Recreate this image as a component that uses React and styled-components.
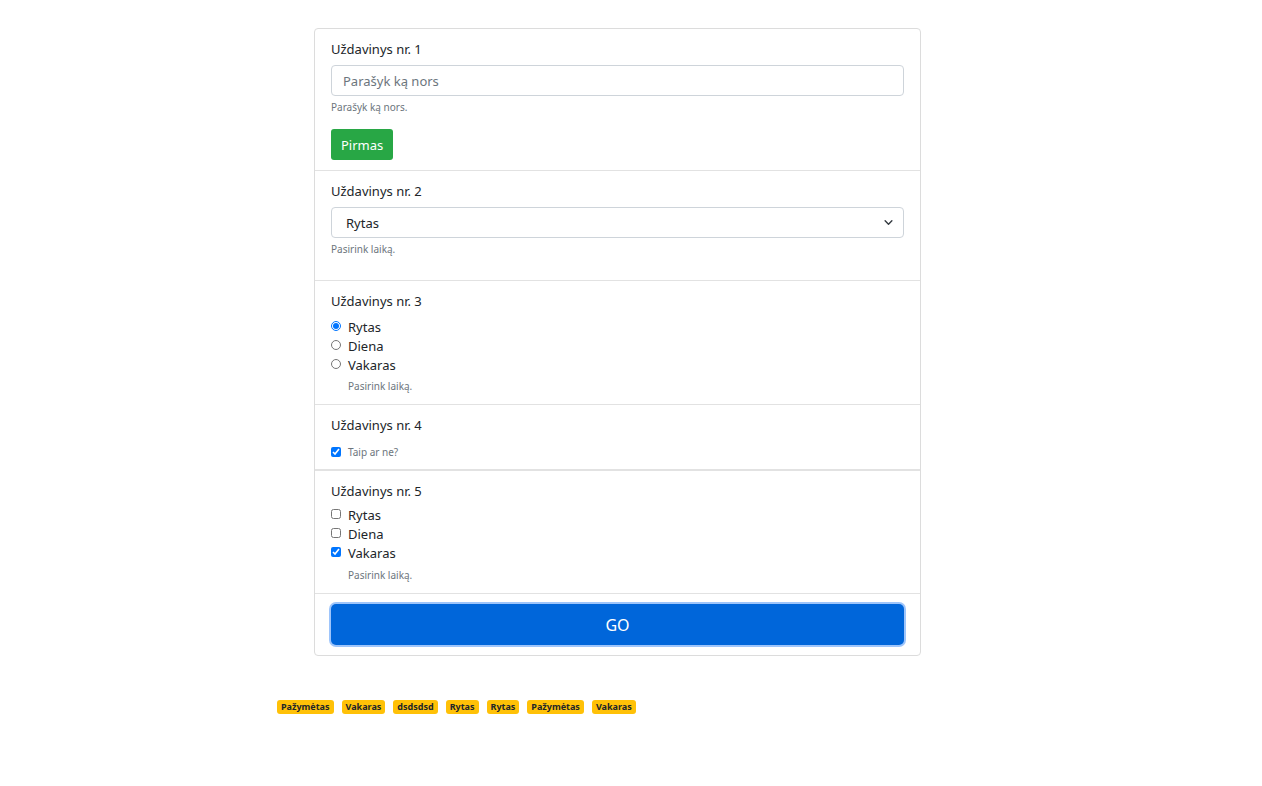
import React from "react"
import styled, { createGlobalStyle } from "styled-components"

const GlobalStyle = createGlobalStyle`
  body {
    margin: 0;
    background: #fff;
    font-family: "Noto Sans", "Liberation Sans", sans-serif;
    color: #212529;
  }
`

const Page = styled.div`
  padding: 28px 0 40px 277px;
`

const Card = styled.form`
  width: 605px;
  margin-left: 37px;
  border: 1px solid #dcdcdc;
  border-radius: 4px;
`

const Section = styled.div`
  padding: 10px 16px ${p => p.$pb || 10}px;
  border-bottom: ${p => p.$thick ? 2 : 1}px solid #e2e2e2;
  &:last-child {
    border-bottom: none;
  }
`

const Label = styled.div`
  font-size: 13px;
  line-height: 20px;
  margin-bottom: ${p => p.$mb ?? 6}px;
`

const Input = styled.input`
  display: block;
  box-sizing: border-box;
  width: 100%;
  height: 31px;
  padding: 0 11px;
  font-family: inherit;
  font-size: 13px;
  color: #495057;
  border: 1px solid #ced4da;
  border-radius: 4px;
  &::placeholder {
    color: #6c757d;
  }
`

const SelectWrap = styled.div`
  position: relative;
  svg {
    position: absolute;
    right: 10px;
    top: 11px;
    pointer-events: none;
  }
`

const Select = styled.select`
  display: block;
  box-sizing: border-box;
  width: 100%;
  height: 31px;
  padding: 0 14px;
  font-family: inherit;
  font-size: 13px;
  color: #212529;
  background: #fff;
  border: 1px solid #ced4da;
  border-radius: 4px;
  appearance: none;
`

const Help = styled.div`
  font-size: 10px;
  line-height: 14px;
  color: #6c757d;
  margin-top: ${p => p.$mt ?? 4}px;
  margin-left: ${p => p.$indent ? 17 : 0}px;
  margin-bottom: ${p => p.$mb || 0}px;
`

const Button = styled.button`
  display: block;
  font-family: inherit;
  border: none;
  color: #fff;
  cursor: pointer;
`

const GreenButton = styled(Button)`
  margin-top: 15px;
  height: 31px;
  padding: 0 10px;
  font-size: 13px;
  background: #28a745;
  border-radius: 3px;
`

const GoButton = styled(Button)`
  width: 100%;
  height: 41px;
  font-size: 16px;
  background: #0066da;
  border-radius: 5px;
  box-shadow: 0 0 0 2px #9ec5fb;
`

const CheckRow = styled.label`
  display: flex;
  align-items: center;
  height: 19px;
  font-size: 13px;
  input {
    width: 10px;
    height: 10px;
    margin: 0 7px 1px 0;
    accent-color: #0075ff;
  }
`

const SmallCheck = styled(CheckRow)`
  margin-top: 10px;
  height: 14px;
  font-size: 10px;
  color: #6c757d;
`

const Badges = styled.div`
  display: flex;
  gap: 8px;
  margin-top: 44px;
`

const Badge = styled.span`
  display: inline-block;
  height: 14px;
  line-height: 14px;
  padding: 0 4px;
  font-size: 9px;
  font-weight: 700;
  color: #212529;
  background: #ffc107;
  border-radius: 3px;
`

const badges = ["Pažymėtas", "Vakaras", "dsdsdsd", "Rytas", "Rytas", "Pažymėtas", "Vakaras"]

export default function App() {
  return (
    <Page>
      <GlobalStyle />
      <Card onSubmit={e => e.preventDefault()}>
        <Section>
          <Label>Uždavinys nr. 1</Label>
          <Input placeholder="Parašyk ką nors" />
          <Help>Parašyk ką nors.</Help>
          <GreenButton type="button">Pirmas</GreenButton>
        </Section>
        <Section>
          <Label>Uždavinys nr. 2</Label>
          <SelectWrap>
            <Select defaultValue="Rytas">
              <option>Rytas</option>
              <option>Diena</option>
              <option>Vakaras</option>
            </Select>
            <svg width="11" height="9" viewBox="0 0 16 16">
              <path d="M2 5l6 6 6-6" fill="none" stroke="#343a40" strokeWidth="2.5" strokeLinecap="round" strokeLinejoin="round" />
            </svg>
          </SelectWrap>
          <Help $mb={14}>Pasirink laiką.</Help>
        </Section>
        <Section $pb={11}>
          <Label $mb={6}>Uždavinys nr. 3</Label>
          <CheckRow><input type="radio" name="laikas" defaultChecked />Rytas</CheckRow>
          <CheckRow><input type="radio" name="laikas" />Diena</CheckRow>
          <CheckRow><input type="radio" name="laikas" />Vakaras</CheckRow>
          <Help $indent $mt={5}>Pasirink laiką.</Help>
        </Section>
        <Section $thick $pb={10}>
          <Label $mb={0}>Uždavinys nr. 4</Label>
          <SmallCheck><input type="checkbox" defaultChecked />Taip ar ne?</SmallCheck>
        </Section>
        <Section $pb={11}>
          <Label $mb={4}>Uždavinys nr. 5</Label>
          <CheckRow><input type="checkbox" />Rytas</CheckRow>
          <CheckRow><input type="checkbox" />Diena</CheckRow>
          <CheckRow><input type="checkbox" defaultChecked />Vakaras</CheckRow>
          <Help $indent $mt={6}>Pasirink laiką.</Help>
        </Section>
        <Section>
          <GoButton type="submit">GO</GoButton>
        </Section>
      </Card>
      <Badges>
        {badges.map((b, i) => <Badge key={i}>{b}</Badge>)}
      </Badges>
    </Page>
  )
}
